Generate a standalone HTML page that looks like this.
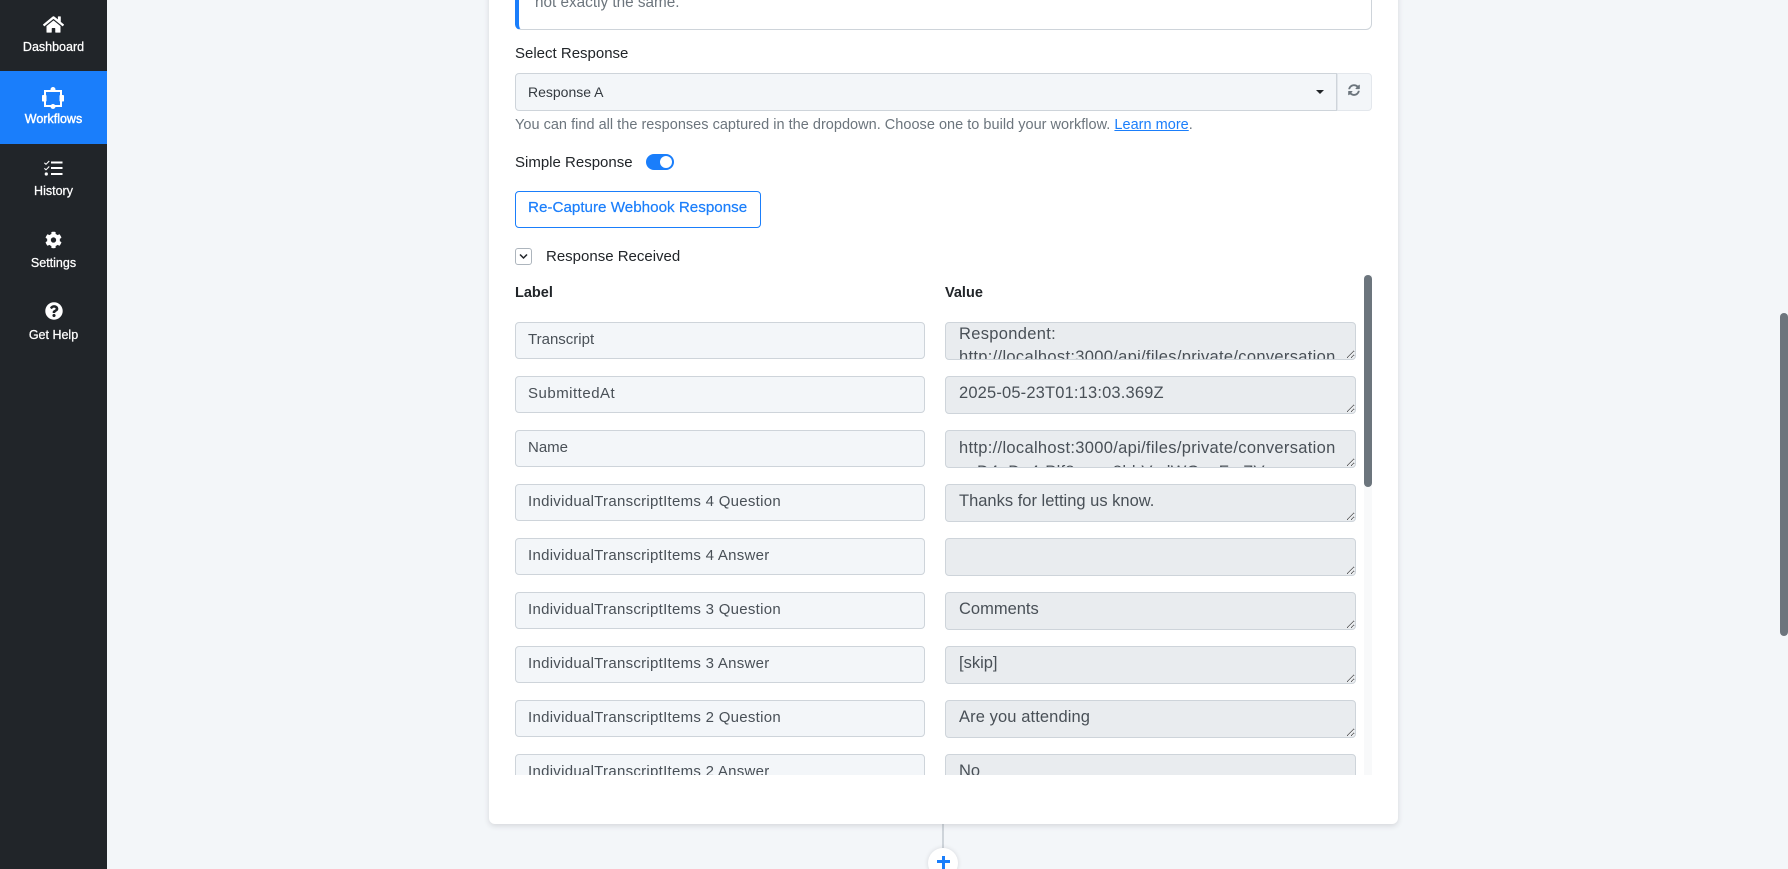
<!DOCTYPE html>
<html lang="en">
<head>
<meta charset="utf-8">
<title>Workflows</title>
<style>
html,body{margin:0;padding:0;width:1788px;height:869px;overflow:hidden;background:#f3f6f9;font-family:"Liberation Sans",sans-serif;color:#212529}
*{box-sizing:border-box}
#root{position:absolute;left:0;top:0;width:1788px;height:869px;overflow:hidden;background:#f3f6f9}
.abs{position:absolute}
#side{position:absolute;left:0;top:0;width:107px;height:869px;background:#212529}
.nav{position:absolute;left:0;width:107px;height:72px;color:#fff;text-align:center;font-size:12.5px;font-weight:400}
.nav svg{position:absolute;fill:#fff}
.nav span{position:absolute;left:0;right:0;top:39px;line-height:16px;-webkit-text-stroke:.25px #fff}
#card{position:absolute;left:489px;top:-100px;width:909px;height:924px;background:#fff;border-radius:6px;box-shadow:0 2px 6px rgba(33,37,41,.14)}
.t{position:absolute;white-space:nowrap;font-size:15px;line-height:20px}
.inp{position:absolute;left:0;width:410px;height:37px;background:#f3f6f9;border:1px solid #ced4da;border-radius:4px;padding:0 12px;line-height:33px;font-size:15px;color:#495057;white-space:nowrap}
.ls{letter-spacing:.28px}
textarea{position:absolute;left:430px;width:411px;height:38px;background:#e9ecef;border:1px solid #ced4da;border-radius:4px;padding:5px 13px 0;line-height:23px;font-size:16.5px;font-family:"Liberation Sans",sans-serif;color:#495057;overflow:hidden;resize:vertical;white-space:pre;margin:0;outline:none}
</style>
</head>
<body>
<div id="root">
<div id="side">
  <div class="nav" style="top:0">
    <svg style="left:43px;top:15px" width="21" height="19" viewBox="0 0 576 512"><path d="M280.37 148.26L96 300.11V464a16 16 0 0 0 16 16l112.06-.29a16 16 0 0 0 15.92-16V368a16 16 0 0 1 16-16h64a16 16 0 0 1 16 16v95.64a16 16 0 0 0 16 16.05L464 480a16 16 0 0 0 16-16V300L295.67 148.26a12.19 12.19 0 0 0-15.3 0zM571.6 251.47L488 182.56V44.05a12 12 0 0 0-12-12h-56a12 12 0 0 0-12 12v72.61L318.47 43a48 48 0 0 0-61 0L4.34 251.47a12 12 0 0 0-1.6 16.9l25.5 31A12 12 0 0 0 45.15 301l235.22-193.74a12.19 12.19 0 0 1 15.3 0L530.9 301a12 12 0 0 0 16.9-1.6l25.5-31a12 12 0 0 0-1.7-16.93z"/></svg>
    <span>Dashboard</span>
  </div>
  <div class="nav" style="top:71px;height:73px;background:#1a7efb">
    <svg style="left:42px;top:16px;fill:none" width="22" height="22" viewBox="0 0 22 22"><rect x="3" y="4" width="16" height="15" fill="none" stroke="#fff" stroke-width="2"/><circle cx="11" cy="2.500" r="2.500" fill="#fff"/><circle cx="11" cy="19.500" r="2.500" fill="#fff"/><rect x="0" y="8" width="4.500" height="6.500" rx=".8" fill="#fff"/><rect x="17.500" y="8" width="4.500" height="6.500" rx=".8" fill="#fff"/></svg>
    <span style="-webkit-text-stroke:.4px #fff;top:40px">Workflows</span>
  </div>
  <div class="nav" style="top:144px">
    <svg style="left:44px;top:16px" width="19" height="16" viewBox="0 0 19 16"><path d="M7 1.500h11.500v2H7zM7 7h11.500v2H7zM7 13h11.500v2H7z"/><path d="M.8 2.400l1.200 1.200L4.800.6l.9.800L2 5 0 3.200z"/><path d="M.8 7.900l1.200 1.200 2.800-3 .9.800L2 10.500 0 8.700z"/><circle cx="2.300" cy="14" r="1.600"/></svg>
    <span>History</span>
  </div>
  <div class="nav" style="top:216px">
    <svg style="left:45px;top:15px" width="17" height="18" viewBox="0 0 512 512"><path d="M487.4 315.7l-42.6-24.6c4.3-23.2 4.3-47 0-70.2l42.6-24.6c4.9-2.8 7.1-8.6 5.5-14-11.1-35.6-30-67.8-54.7-94.6-3.8-4.1-10-5.1-14.8-2.3L380.8 110c-17.9-15.4-38.5-27.3-60.8-35.1V25.8c0-5.6-3.9-10.5-9.4-11.7-36.7-8.2-74.3-7.8-109.2 0-5.5 1.2-9.4 6.1-9.4 11.7V75c-22.2 7.9-42.8 19.8-60.8 35.1L88.7 85.5c-4.9-2.8-11-1.9-14.8 2.3-24.7 26.7-43.6 58.9-54.7 94.6-1.7 5.4.6 11.2 5.5 14L67.3 221c-4.3 23.2-4.3 47 0 70.2l-42.6 24.6c-4.9 2.8-7.1 8.6-5.5 14 11.1 35.6 30 67.8 54.7 94.6 3.8 4.1 10 5.1 14.8 2.3l42.6-24.6c17.9 15.4 38.5 27.3 60.8 35.1v49.2c0 5.6 3.9 10.5 9.4 11.7 36.7 8.2 74.3 7.8 109.2 0 5.5-1.2 9.4-6.1 9.4-11.7v-49.2c22.2-7.9 42.8-19.8 60.8-35.1l42.6 24.6c4.9 2.8 11 1.9 14.8-2.3 24.7-26.7 43.6-58.9 54.7-94.6 1.5-5.5-.7-11.3-5.6-14.1zM256 336c-44.1 0-80-35.9-80-80s35.9-80 80-80 80 35.9 80 80-35.9 80-80 80z"/></svg>
    <span>Settings</span>
  </div>
  <div class="nav" style="top:288px">
    <svg style="left:45px;top:14px" width="18" height="18" viewBox="0 0 512 512"><path d="M504 256c0 136.997-111.043 248-248 248S8 392.997 8 256C8 119.083 119.043 8 256 8s248 111.083 248 248zM262.655 90c-54.497 0-89.255 22.957-116.549 63.758-3.536 5.286-2.353 12.415 2.715 16.258l34.699 26.31c5.205 3.947 12.621 3.008 16.665-2.122 17.864-22.658 30.113-35.797 57.303-35.797 20.429 0 45.698 13.148 45.698 32.958 0 14.976-12.363 22.667-32.534 33.976C247.128 238.528 216 254.941 216 296v4c0 6.627 5.373 12 12 12h56c6.627 0 12-5.373 12-12v-1.333c0-28.462 83.186-29.647 83.186-106.667 0-58.002-60.165-102-116.531-102zM256 338c-25.365 0-46 20.635-46 46 0 25.364 20.635 46 46 46s46-20.636 46-46c0-25.365-20.635-46-46-46z"/></svg>
    <span>Get Help</span>
  </div>
</div>

<!-- connector and add button -->
<div class="abs" style="left:942px;top:824px;width:2px;height:24px;background:#ced4da"></div>
<div class="abs" style="left:928px;top:848px;width:30px;height:30px;border-radius:50%;background:#fff;box-shadow:0 0 5px rgba(33,37,41,.14)"></div>
<div class="abs" style="left:937px;top:860px;width:13px;height:3px;background:#1a7efb"></div>
<div class="abs" style="left:942px;top:856px;width:3px;height:13px;background:#1a7efb"></div>

<div id="card"></div>

<!-- alert -->
<div class="abs" style="left:515px;top:-40px;width:857px;height:70px;background:#fff;border:1px solid #ced4da;border-left:4px solid #1a7efb;border-radius:6px"></div>
<div class="t" style="left:535px;top:-7px;color:#6c757d;font-size:15.3px">not exactly the same.</div>

<div class="t" style="left:515px;top:44px;color:#212529">Select Response</div>

<!-- select -->
<div class="abs" style="left:515px;top:73px;width:822px;height:38px;background:#f3f6f9;border:1px solid #ced4da;border-radius:4px 0 0 4px"></div>
<div class="t" style="left:528px;top:82px;font-size:14px;color:#343a40">Response A</div>
<div class="abs" style="left:1316px;top:90px;width:0;height:0;border-left:4px solid transparent;border-right:4px solid transparent;border-top:4px solid #212529"></div>
<div class="abs" style="left:1337px;top:73px;width:35px;height:38px;background:#f3f6f9;border:1px solid #e3e7ec;border-radius:0 4px 4px 0"></div>
<svg class="abs" style="left:1348px;top:84px;fill:#6c757d" width="12" height="12" viewBox="0 0 512 512"><path d="M370.72 133.28C339.458 104.008 298.888 87.962 255.848 88c-77.458.068-144.328 53.178-162.791 126.85-1.344 5.363-6.122 9.15-11.651 9.15H24.103c-7.498 0-13.194-6.807-11.807-14.176C33.933 94.924 134.813 8 256 8c66.448 0 126.791 26.136 171.315 68.685L463.03 40.97C478.149 25.851 504 36.559 504 57.941V192c0 13.255-10.745 24-24 24H345.941c-21.382 0-32.09-25.851-16.971-40.971l41.75-41.749zM32 296h134.059c21.382 0 32.09 25.851 16.971 40.971l-41.75 41.75c31.262 29.273 71.835 45.319 114.876 45.28 77.418-.07 144.315-53.144 162.787-126.849 1.344-5.363 6.122-9.15 11.651-9.15h57.304c7.498 0 13.194 6.807 11.807 14.176C478.067 417.076 377.187 504 256 504c-66.448 0-126.791-26.136-171.315-68.685L48.97 471.03C33.851 486.149 8 475.441 8 454.059V320c0-13.255 10.745-24 24-24z"/></svg>

<div class="t" style="left:515px;top:115px;font-size:14.5px;letter-spacing:.02px;color:#6c757d">You can find all the responses captured in the dropdown. Choose one to build your workflow. <span style="color:#1a7efb;text-decoration:underline">Learn more</span>.</div>

<div class="t" style="left:515px;top:153px">Simple Response</div>
<div class="abs" style="left:646px;top:154px;width:28px;height:16px;border-radius:8px;background:#1a7efb"></div>
<div class="abs" style="left:660px;top:156px;width:12px;height:12px;border-radius:50%;background:#fff"></div>

<div class="abs" style="left:515px;top:191px;width:246px;height:37px;background:#fff;border:1px solid #1a7efb;border-radius:4px"></div>
<div class="t" style="left:528px;top:198px;color:#1a7efb;font-size:15.2px;-webkit-text-stroke:.2px #1a7efb">Re-Capture Webhook Response</div>

<div class="abs" style="left:515px;top:248px;width:17px;height:17px;border:1px solid #adb5bd;border-radius:3px;background:#fff"></div>
<svg class="abs" style="left:519px;top:253px" width="9" height="7" viewBox="0 0 9 7"><path d="M1 1.500l3.500 3.500L8 1.500" fill="none" stroke="#212529" stroke-width="1.500"/></svg>
<div class="t" style="left:546px;top:247px">Response Received</div>

<!-- scroll area -->
<div class="abs" style="left:515px;top:275px;width:857px;height:500px;overflow:hidden">
  <div class="abs" style="left:849px;top:0;width:8px;height:500px;background:#f8f9fa"></div>
  <div class="abs" style="left:849px;top:0;width:8px;height:212px;background:#6c757d;border-radius:4px"></div>
  <div class="t" style="left:0;top:8px;font-weight:700;font-size:14.500px;color:#212529">Label</div>
  <div class="t" style="left:430px;top:8px;font-weight:700;font-size:14.500px;color:#212529">Value</div>

  <div class="inp" style="top:47px">Transcript</div>
  <textarea readonly rows="2" style="top:47px;padding-top:0;line-height:23px;letter-spacing:.31px">Respondent:
http://localhost:3000/api/files/private/conversation</textarea>

  <div class="inp" style="top:101px;letter-spacing:.5px">SubmittedAt</div>
  <textarea readonly rows="1" style="top:101px;letter-spacing:.16px">2025-05-23T01:13:03.369Z</textarea>

  <div class="inp" style="top:155px">Name</div>
  <textarea readonly rows="2" style="top:155px;padding-top:5px;line-height:24px;letter-spacing:.31px">http://localhost:3000/api/files/private/conversation
s_D4nDn4rPlf8aaaa8hbVsdWGnnFmZV</textarea>

  <div class="inp ls" style="top:209px">IndividualTranscriptItems 4 Question</div>
  <textarea readonly rows="1" style="top:209px">Thanks for letting us know.</textarea>

  <div class="inp ls" style="top:263px">IndividualTranscriptItems 4 Answer</div>
  <textarea readonly rows="1" style="top:263px"></textarea>

  <div class="inp ls" style="top:317px">IndividualTranscriptItems 3 Question</div>
  <textarea readonly rows="1" style="top:317px">Comments</textarea>

  <div class="inp ls" style="top:371px">IndividualTranscriptItems 3 Answer</div>
  <textarea readonly rows="1" style="top:371px">[skip]</textarea>

  <div class="inp ls" style="top:425px">IndividualTranscriptItems 2 Question</div>
  <textarea readonly rows="1" style="top:425px;letter-spacing:.1px">Are you attending</textarea>

  <div class="inp ls" style="top:479px">IndividualTranscriptItems 2 Answer</div>
  <textarea readonly rows="1" style="top:479px">No</textarea>
</div>

<!-- page scrollbar -->
<div class="abs" style="left:1780px;top:313px;width:8px;height:323px;background:#6c757d;border-radius:4px"></div>
</div>
</body>
</html>
